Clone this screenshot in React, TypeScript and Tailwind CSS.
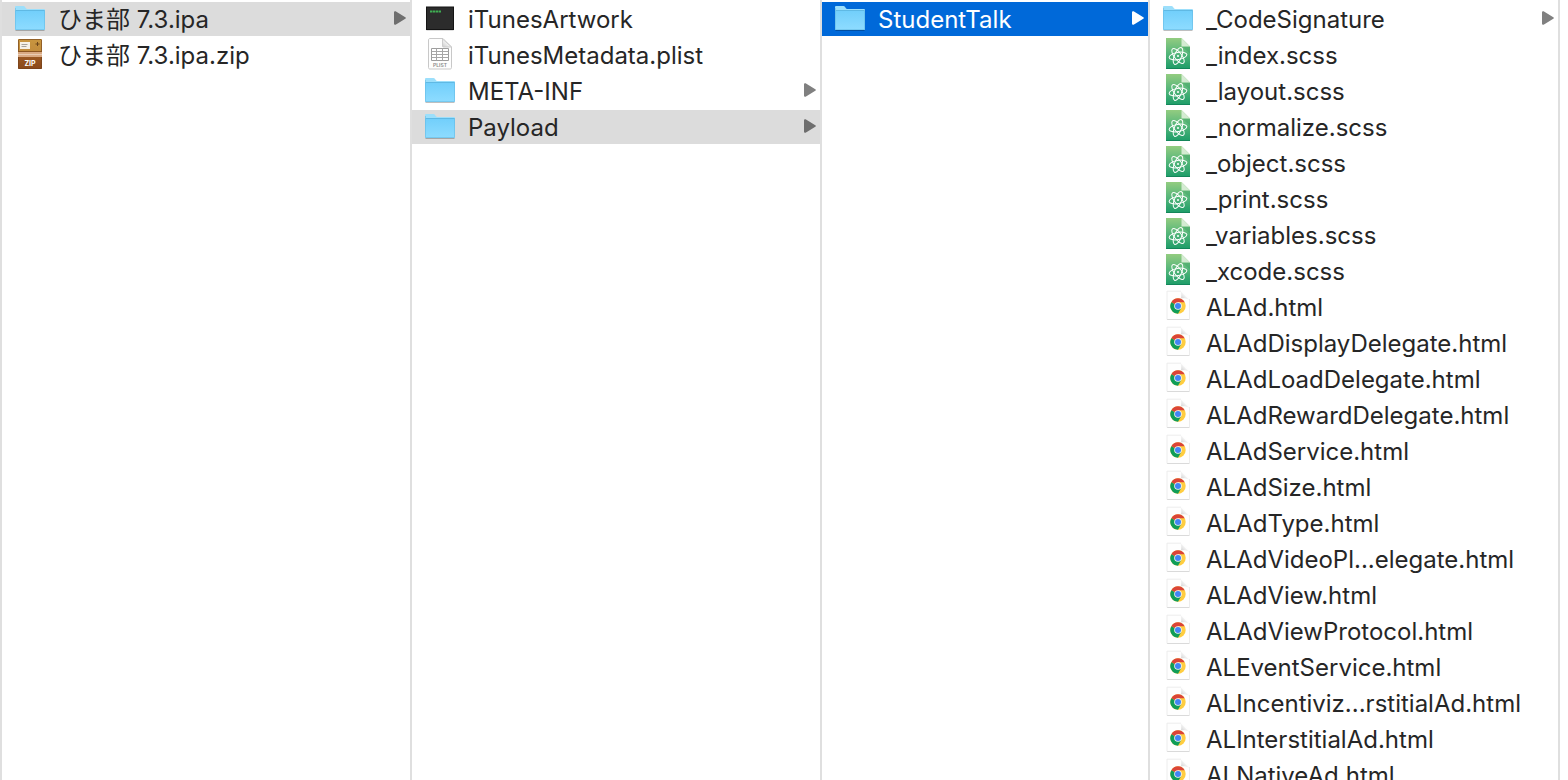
import { useState } from 'react';
import type { ReactNode } from 'react';

type Kind = 'folder' | 'zip' | 'exec' | 'plist' | 'atom' | 'chrome';

type Item = {
  name: string;
  kind: Kind;
};

const columns: Item[][] = [
  [
    { name: 'ひま部 7.3.ipa', kind: 'folder' },
    { name: 'ひま部 7.3.ipa.zip', kind: 'zip' },
  ],
  [
    { name: 'iTunesArtwork', kind: 'exec' },
    { name: 'iTunesMetadata.plist', kind: 'plist' },
    { name: 'META-INF', kind: 'folder' },
    { name: 'Payload', kind: 'folder' },
  ],
  [{ name: 'StudentTalk', kind: 'folder' }],
  [
    { name: '_CodeSignature', kind: 'folder' },
    { name: '_index.scss', kind: 'atom' },
    { name: '_layout.scss', kind: 'atom' },
    { name: '_normalize.scss', kind: 'atom' },
    { name: '_object.scss', kind: 'atom' },
    { name: '_print.scss', kind: 'atom' },
    { name: '_variables.scss', kind: 'atom' },
    { name: '_xcode.scss', kind: 'atom' },
    { name: 'ALAd.html', kind: 'chrome' },
    { name: 'ALAdDisplayDelegate.html', kind: 'chrome' },
    { name: 'ALAdLoadDelegate.html', kind: 'chrome' },
    { name: 'ALAdRewardDelegate.html', kind: 'chrome' },
    { name: 'ALAdService.html', kind: 'chrome' },
    { name: 'ALAdSize.html', kind: 'chrome' },
    { name: 'ALAdType.html', kind: 'chrome' },
    { name: 'ALAdVideoPl...elegate.html', kind: 'chrome' },
    { name: 'ALAdView.html', kind: 'chrome' },
    { name: 'ALAdViewProtocol.html', kind: 'chrome' },
    { name: 'ALEventService.html', kind: 'chrome' },
    { name: 'ALIncentiviz...rstitialAd.html', kind: 'chrome' },
    { name: 'ALInterstitialAd.html', kind: 'chrome' },
    { name: 'ALNativeAd.html', kind: 'chrome' },
  ],
];

// Gradients shared by every file icon
function IconDefs() {
  return (
    <svg className="absolute h-0 w-0" aria-hidden="true">
      <defs>
        <linearGradient id="folder-front" x1="0" y1="0" x2="0" y2="1">
          <stop offset="0" stopColor="#72cffb" />
          <stop offset="1" stopColor="#8edcff" />
        </linearGradient>
        <linearGradient id="zip-top" x1="0" y1="0" x2="0" y2="1">
          <stop offset="0" stopColor="#c9963f" />
          <stop offset="1" stopColor="#c08a3c" />
        </linearGradient>
        <linearGradient id="zip-bottom" x1="0" y1="0" x2="0" y2="1">
          <stop offset="0" stopColor="#b06f30" />
          <stop offset="1" stopColor="#8a481a" />
        </linearGradient>
        <linearGradient id="atom-page" x1="0" y1="0" x2="0" y2="1">
          <stop offset="0" stopColor="#93cc80" />
          <stop offset="0.5" stopColor="#55b67a" />
          <stop offset="1" stopColor="#1c9c68" />
        </linearGradient>
        <linearGradient id="page-fold" x1="0" y1="1" x2="1" y2="0">
          <stop offset="0" stopColor="#c9c9c9" />
          <stop offset="0.5" stopColor="#f4f4f4" />
          <stop offset="1" stopColor="#ffffff" />
        </linearGradient>
      </defs>
    </svg>
  );
}

const icons: Record<Kind, ReactNode> = {
  folder: (
    <>
      <path d="M1.5 27.5h29" stroke="#000" strokeOpacity="0.25" />
      <path d="M1 26V4.2c0-.7.5-1.2 1.2-1.2h7.3c.6 0 1 .2 1.4.7l1 1.5c.3.5.7.8 1.3.8h16.600c.7 0 1.200.5 1.200 1.200V26z" fill="#9cdffb" />
      <path d="M1 8h30v18c0 .6-.4 1-1 1H2c-.6 0-1-.4-1-1z" fill="url(#folder-front)" />
      <path d="M1.5 7.500h29" stroke="#5fb9e4" />
      <path d="M1.5 5v21.500h29V7" fill="none" stroke="#5fb6df" strokeOpacity="0.5" />
    </>
  ),
  zip: (
    <>
      <rect x="4" y="0" width="24" height="30" rx="1" fill="url(#zip-bottom)" />
      <path d="M5 0h22a1 1 0 0 1 1 1v14H4V1a1 1 0 0 1 1-1z" fill="url(#zip-top)" />
      <path d="M4.500 1v28.500h23V1M5 .5h22" fill="none" stroke="#70401a" strokeOpacity="0.6" />
      <rect x="4" y="13" width="24" height="5" fill="#d9aa84" />
      <path d="M4 12.500h24" stroke="#8b5521" />
      <path d="M4 15.500h24" stroke="#e9ccb4" />
      <rect x="6" y="3" width="10" height="7" fill="#f6f1e6" />
      <path d="M7.500 5.500h6M7.500 7.500h5" stroke="#a7a29a" />
      <path d="M23.500 3v4M21.500 5h4" stroke="#6d461b" />
      <text x="16" y="27" textAnchor="middle" fontSize="7" fontWeight="700" fill="#fff">ZIP</text>
    </>
  ),
  exec: (
    <>
      <rect x="2" y="4.500" width="28" height="23" rx="1" fill="#000" fillOpacity="0.25" />
      <rect x="2.500" y="4" width="27" height="22.500" fill="#2c2c2c" stroke="#141414" />
      <path d="M6 8.500h2.500M9 8.500h2.500M12 8.500h2M14.500 8.500h2.500" stroke="#3fae52" strokeWidth="2" />
    </>
  ),
  plist: (
    <>
      <path d="M4.500 1c0-.8.5-1.500 1.500-1.500h13l8.500 8.500V28.500c0 1-.5 1.500-1.500 1.500H6c-1 0-1.500-.5-1.500-1.500z" fill="#fdfdfd" stroke="#c8c8c8" />
      <path d="M18.500 0v7c0 .8.4 1 1 1h8z" fill="url(#page-fold)" stroke="#cccccc" />
      <path d="M7.500 9.500h17v12h-17z" fill="#fff" stroke="#9c9c9c" />
      <path d="M7.500 12.500h17M7.500 15.500h17M7.500 18.500h17M12.500 9.500v12M18.500 9.500v12" stroke="#a6a6a6" />
      <text x="16" y="28" textAnchor="middle" fontSize="5" fontWeight="600" fill="#8a8a8a">PLIST</text>
    </>
  ),
  atom: (
    <>
      <path d="M4-1h15.500l8.500 8.500V30H4z" fill="url(#atom-page)" />
      <path d="M4 29.500h24" stroke="#14865a" />
      <path d="M28 7.500v7l-8-7z" fill="#2e9a62" fillOpacity="0.35" />
      <path d="M19.500-1v8.500H28z" fill="#d4ebd2" />
      <g fill="none" stroke="#fff" strokeWidth="1">
        <ellipse cx="16" cy="17" rx="9" ry="3.600" transform="rotate(-10 16 17)" />
        <ellipse cx="16" cy="17" rx="9" ry="3.600" transform="rotate(52 16 17)" />
        <ellipse cx="16" cy="17" rx="9" ry="3.600" transform="rotate(113 16 17)" />
      </g>
      <circle cx="16" cy="17" r="1" fill="#fff" />
    </>
  ),
  chrome: (
    <>
      <path d="M5 0h15l7.500 7.500V29H5z" fill="#fefefe" />
      <path d="M5 28.500h22.500" stroke="#dadada" />
      <path d="M5 0v28.500M27.500 8v20.500M5 .2h14" stroke="#ececec" />
      <path d="M18.500 0c1 2 1 5 .5 7.500 2.500-.5 6-.3 8.500 1.500z" fill="url(#page-fold)" />
      {/* three 120° arms around the blue hub */}
      <circle cx="16" cy="15" r="7.700" fill="#ffcd40" />
      <path d="M16 15 9.330 11.150A7.700 7.700 0 0 1 22.670 11.150H16z" fill="#db4437" />
      <path d="M9.330 11.150A7.700 7.700 0 0 0 16 22.700L19.300 16.900 16 15z" fill="#0f9d58" />
      <circle cx="16" cy="15" r="3.800" fill="#f4f4f4" />
      <circle cx="16" cy="15" r="3" fill="#4285f4" />
    </>
  ),
};

function FileIcon({ kind }: { kind: Kind }) {
  return (
    <svg viewBox="0 0 32 32" className="h-8 w-8 shrink-0 overflow-visible" aria-hidden="true">
      {icons[kind]}
    </svg>
  );
}

function Arrow() {
  return (
    <svg viewBox="0 0 12 16" className="mb-0.5 h-4 w-3 shrink-0" fill="currentColor" aria-hidden="true">
      <path d="M0 2.200C0 1.200.8.900 1.600 1.300L11.300 7.200c.7.400.7 1.200 0 1.600L1.600 14.700C.8 15.100 0 14.800 0 13.800z" />
    </svg>
  );
}

export default function App() {
  const [selected, setSelected] = useState(['ひま部 7.3.ipa', 'Payload', 'StudentTalk', '']);
  const active = 2;

  const select = (col: number, name: string) => {
    setSelected(selected.map((value, i) => (i === col ? name : value)));
  };

  return (
    <main
      lang="ja"
      className="grid h-screen grid-cols-[410fr_410fr_328fr_410fr] overflow-hidden border-l-2 border-[#dfdfdf] bg-white pr-2 font-['Inter','Noto_Sans_CJK_JP',sans-serif] text-[#262626]"
    >
      <IconDefs />
      {columns.map((items, col) => (
        <ul key={col} className="flex min-w-0 flex-col gap-0.5 overflow-hidden border-r-2 border-[#dfdfdf] pt-0.5">
          {items.map((item) => {
            const isSelected = selected[col] === item.name;
            const background = isSelected ? (col === active ? 'bg-[#0069d9] text-white' : 'bg-[#dcdcdc]') : '';
            const arrowColor = isSelected ? (col === active ? 'text-white' : 'text-[#6e6e6e]') : 'text-[#808080]';
            return (
              <li key={item.name} className="shrink-0">
                <button
                  type="button"
                  onClick={() => select(col, item.name)}
                  className={`flex h-[34px] w-full items-center gap-3 pr-1 pl-3 text-left text-2xl leading-8 ${background}`}
                >
                  <FileIcon kind={item.kind} />
                  <span className="min-w-0 flex-1 truncate pt-0.5">{item.name}</span>
                  {item.kind === 'folder' && (
                    <span className={arrowColor}>
                      <Arrow />
                    </span>
                  )}
                </button>
              </li>
            );
          })}
        </ul>
      ))}
    </main>
  );
}
